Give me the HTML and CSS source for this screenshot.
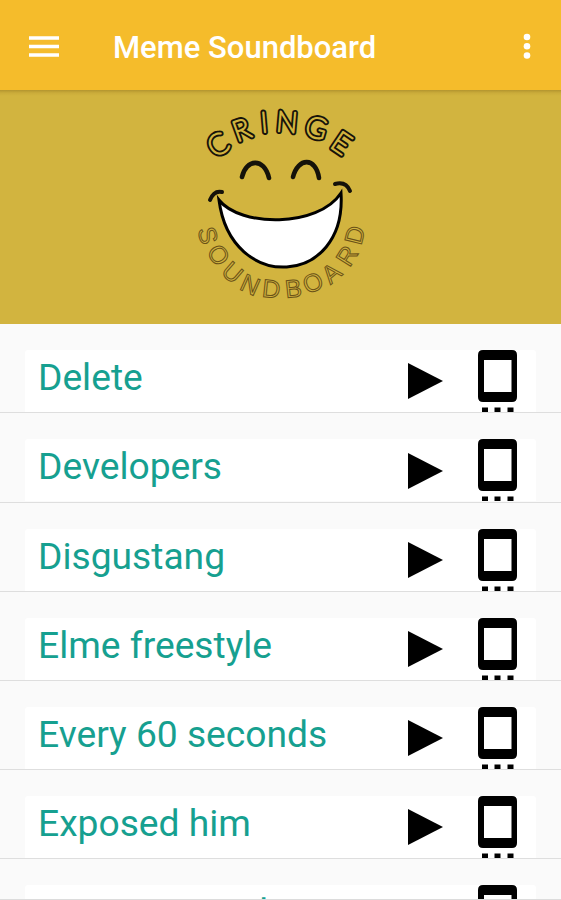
FILE: index.html
```html
<!DOCTYPE html>
<html lang="en">
<head>
<meta charset="utf-8">
<title>Meme Soundboard</title>
<link rel="stylesheet" href="styles.css">
</head>
<body>
<header class="bar">
  <svg class="menu" viewBox="0 0 30 21"><path d="M0 2h30M0 10.500h30M0 19h30"/></svg>
  <h1 class="title">Meme Soundboard</h1>
  <svg class="more" viewBox="0 0 8 26"><circle cx="4" cy="4" r="3.300"/><circle cx="4" cy="13.200" r="3.300"/><circle cx="4" cy="22.500" r="3.300"/></svg>
</header>
<section class="banner">
  <svg class="logo" viewBox="190 91 190 233">
    <defs>
      <text id="cringe" x="215 237 261.500 275.500 303.500 329" y="158 142 132.500 131 134.500 146.500" rotate="-32 -20 -5 5 16 34">CRINGE</text>
    </defs>
    <use href="#cringe" class="letter-edge"/>
    <use href="#cringe" class="letter-core"/>
    <text class="lower" x="197.500 206 220 238.500 261.500 286 307.500 330.500 349.500 361" y="229.500 251.500 273 289 296.500 298 294.500 285 268 246" rotate="76 57 41 24 6 -6 -24 -40 -58 -76">SOUNDBOARD</text>
    <g class="brow">
      <path class="eye" d="M242 177C246 159 264 157 269 178"/>
      <path class="eye" d="M293 177C298 157 316 157 319 178"/>
      <path d="M210 200Q214 190 222 192"/>
      <path d="M335 184Q346 181 350 191"/>
    </g>
    <path class="smile" d="M219 200C240 227 318 228 341 193C347 287 231 294 219 200Z"/>
  </svg>
</section>
<main class="list">
  <div class="row"><div class="card"><span class="name">Delete</span><svg class="play"><use href="#play"/></svg><svg class="phone"><use href="#phone"/></svg></div></div>
  <div class="row"><div class="card"><span class="name">Developers</span><svg class="play"><use href="#play"/></svg><svg class="phone"><use href="#phone"/></svg></div></div>
  <div class="row"><div class="card"><span class="name">Disgustang</span><svg class="play"><use href="#play"/></svg><svg class="phone"><use href="#phone"/></svg></div></div>
  <div class="row"><div class="card"><span class="name">Elme freestyle</span><svg class="play"><use href="#play"/></svg><svg class="phone"><use href="#phone"/></svg></div></div>
  <div class="row"><div class="card"><span class="name">Every 60 seconds</span><svg class="play"><use href="#play"/></svg><svg class="phone"><use href="#phone"/></svg></div></div>
  <div class="row"><div class="card"><span class="name">Exposed him</span><svg class="play"><use href="#play"/></svg><svg class="phone"><use href="#phone"/></svg></div></div>
  <div class="row"><div class="card"><span class="name">Cat screamed</span><svg class="play"><use href="#play"/></svg><svg class="phone"><use href="#phone"/></svg></div></div>
</main>
<svg class="symbols">
  <symbol id="play" viewBox="0 0 35 36"><path d="M0 0L35 18L0 36Z"/></symbol>
  <symbol id="phone" viewBox="0 0 39 62"><path fill-rule="evenodd" d="M5 0H34Q39 0 39 5V47Q39 52 34 52H5Q0 52 0 47V5Q0 0 5 0ZM6 10V42H33.500V10Z"/><path d="M4 57.500h6v4.500H4ZM16.500 57.500h6v4.500h-6ZM29.500 57.500h6v4.500h-6Z"/></symbol>
</svg>
</body>
</html>
```
FILE: styles.css
```css
body {
  box-sizing: border-box;
  margin: 0;
  height: 900px;
  overflow: hidden;
  background: #fafafa;
  border-bottom: 1px solid #dcdcdc;
  font-family: Roboto, sans-serif;
  display: flex;
  flex-direction: column;
}
.bar {
  display: flex;
  flex: none;
  align-items: center;
  height: 90px;
  background: #f5bc2b;
}
.menu { width: 30px; height: 21px; margin: 2px 0 0 29px; stroke: #fff; stroke-width: 3.4; }
.title { margin: 6px auto 0 54px; font-size: 31px; line-height: 38px; font-weight: 500; color: #fff; }
.more { width: 8px; height: 26px; margin: 2px 30px 0 0; fill: #fff; }
.banner {
  flex: none;
  height: 234px;
  background: linear-gradient(#b3952f, #cbac3a 3px, #d2b43f 6px);
}
.logo { display: block; width: 190px; height: 233px; padding-top: 1px; margin-left: 190px; }
.logo use { font-family: Lato, sans-serif; font-weight: 100; font-size: 28.5px; stroke-linejoin: round; }
.letter-edge { fill: #17130a; stroke: #17130a; stroke-width: 5.6; }
.letter-core { fill: #d2b43f; stroke: #d2b43f; stroke-width: 1.8; }
.lower { font-family: "Liberation Sans", sans-serif; font-size: 25px; fill: none; stroke: #6b5217; stroke-width: 1; }
.brow { fill: none; stroke: #15120a; stroke-width: 4; stroke-linecap: round; }
.eye { stroke-width: 4.6; }
.smile { fill: #fff; stroke: #000; stroke-width: 3; }
.list { flex: 1; min-height: 0; overflow: hidden; }
.row {
  box-sizing: border-box;
  height: 89.2px;
  padding: 26px 25px 0;
  border-bottom: 1.5px solid #dedede;
}
.row:first-child { padding-top: 26.2px; height: 89.4px; }
.card {
  display: flex;
  height: 62px;
  padding: 0 19px 0 13px;
  background: #fff;
  border-radius: 3px 3px 0 0;
}
.name { flex: 1; font-size: 37.2px; line-height: 54px; color: #16a090; }
.play { width: 35px; height: 36px; margin: 13.2px 35px 0 0; }
.phone { width: 39px; height: 62px; }
.symbols { display: none; }
```
